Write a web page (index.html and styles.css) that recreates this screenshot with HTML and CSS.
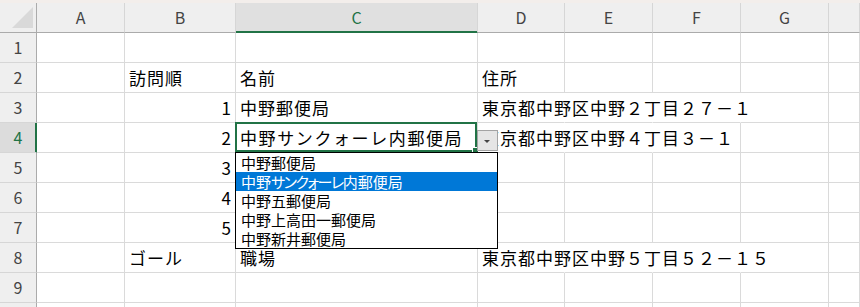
FILE: index.html
```html
<!DOCTYPE html>
<html lang="ja">
<head>
<meta charset="utf-8">
<title>Sheet</title>
<link rel="stylesheet" href="styles.css">
</head>
<body>
<div class="app">
  <div class="band"></div>
  <div class="sheet">
    <div class="corner"><svg class="tri" width="37" height="29" viewBox="0 0 37 29"><polygon points="12,25 33,25 33,4" fill="#d9d9d9"/></svg></div>
    <div class="ch">A</div><div class="ch">B</div><div class="ch ch-sel">C</div><div class="ch">D</div><div class="ch">E</div><div class="ch">F</div><div class="ch">G</div><div class="ch"></div>

    <div class="rh">1</div><div class="c"></div><div class="c"></div><div class="c"></div><div class="c"></div><div class="c"></div><div class="c"></div><div class="c"></div><div class="c"></div>

    <div class="rh">2</div><div class="c"></div><div class="c">訪問順</div><div class="c">名前</div><div class="c">住所</div><div class="c"></div><div class="c"></div><div class="c"></div><div class="c"></div>

    <div class="rh">3</div><div class="c"></div><div class="c num">1</div><div class="c">中野郵便局</div><div class="c nb">東京都中野区中野２丁目２７－１</div><div class="c nb"></div><div class="c nb"></div><div class="c"></div><div class="c"></div>

    <div class="rh rh-sel">4</div><div class="c"></div><div class="c num">2</div><div class="c active wide">中野サンクォーレ内郵便局<span class="frame"></span></div><div class="c nb">東京都中野区中野４丁目３－１</div><div class="c nb"></div><div class="c"></div><div class="c"></div><div class="c"></div>

    <div class="rh">5</div><div class="c"></div><div class="c num">3</div><div class="c"></div><div class="c"></div><div class="c"></div><div class="c"></div><div class="c"></div><div class="c"></div>

    <div class="rh">6</div><div class="c"></div><div class="c num">4</div><div class="c"></div><div class="c"></div><div class="c"></div><div class="c"></div><div class="c"></div><div class="c"></div>

    <div class="rh">7</div><div class="c"></div><div class="c num">5</div><div class="c"></div><div class="c"></div><div class="c"></div><div class="c"></div><div class="c"></div><div class="c"></div>

    <div class="rh">8</div><div class="c"></div><div class="c">ゴール</div><div class="c">職場</div><div class="c nb">東京都中野区中野５丁目５２－１５</div><div class="c nb"></div><div class="c nb"></div><div class="c"></div><div class="c"></div>

    <div class="rh">9</div><div class="c"></div><div class="c"></div><div class="c"></div><div class="c"></div><div class="c"></div><div class="c"></div><div class="c"></div><div class="c"></div>

    <div class="rh"></div><div class="c"></div><div class="c"></div><div class="c"></div><div class="c"></div><div class="c"></div><div class="c"></div><div class="c"></div><div class="c"></div>
  </div>

  <div class="dd-btn"><svg width="19" height="19" viewBox="0 0 19 19"><polygon points="6,9 12,9 9,12" fill="#444"/></svg></div>
  <ul class="dd-list">
    <li>中野郵便局</li>
    <li class="hl">中野<span class="kana">サンクォーレ</span>内郵便局</li>
    <li>中野五郵便局</li>
    <li>中野上高田一郵便局</li>
    <li>中野新井郵便局</li>
  </ul>
</div>
</body>
</html>
```

FILE: styles.css
```css
html, body {
  margin: 0;
  padding: 0;
  background: #ffffff;
  overflow: hidden;
}

.app {
  position: relative;
  width: 860px;
  height: 307px;
  overflow: hidden;
  font-family: "Noto Sans CJK JP", "Noto Sans", sans-serif;
}

.band {
  height: 3px;
  background: #f3eeeb;
}

.sheet {
  display: grid;
  grid-template-columns: 37px 88px 111px 242px 87px 88px 88px 88px 1fr;
  grid-auto-rows: 30px;
}

.corner {
  background: #efefef;
  border-right: 1px solid #ababab;
  border-bottom: 1px solid #ababab;
  box-sizing: border-box;
}

.tri {
  display: block;
}

.ch {
  box-sizing: border-box;
  background: #efefef;
  border-right: 1px solid #d6d6d6;
  border-bottom: 1px solid #ababab;
  color: #444;
  font-size: 16px;
  line-height: 29px;
  text-align: center;
}

.ch-sel {
  background: #e0e0e0;
  color: #217346;
  border-bottom-color: #217346;
  box-shadow: inset 0 -1px 0 #217346;
}

.rh {
  box-sizing: border-box;
  background: #efefef;
  border-right: 1px solid #ababab;
  border-bottom: 1px solid #d6d6d6;
  color: #444;
  font-size: 16px;
  line-height: 29px;
  text-align: center;
}

.rh-sel {
  background: #dcdcdc;
  color: #217346;
  border-right-color: #217346;
  box-shadow: inset -1px 0 0 #217346;
}

.c {
  position: relative;
  box-sizing: border-box;
  border-right: 1px solid #dadada;
  border-bottom: 1px solid #dadada;
  font-size: 17px;
  letter-spacing: 1px;
  line-height: 29px;
  padding-left: 4px;
  color: #000;
  white-space: nowrap;
  overflow: visible;
}

.c.wide {
  letter-spacing: 1.6px;
}

.c.nb {
  border-right-color: transparent;
  z-index: 1;
}

.c.num {
  text-align: right;
  padding-right: 4px;
  letter-spacing: 0;
}

.frame {
  position: absolute;
  left: -1px;
  top: -1px;
  right: 0;
  bottom: 0;
  border: 2px solid #217346;
  pointer-events: none;
}

.frame::after {
  content: "";
  position: absolute;
  right: -4px;
  bottom: -4px;
  width: 5px;
  height: 5px;
  background: #217346;
  border: 1px solid #fff;
}

.dd-btn {
  position: absolute;
  left: 477px;
  top: 130px;
  width: 21px;
  height: 21px;
  box-sizing: border-box;
  background: #e5e5e5;
  border: 1px solid #a3a3a3;
  z-index: 3;
}

.dd-btn svg {
  display: block;
}

.dd-list {
  position: absolute;
  left: 235px;
  top: 152px;
  width: 263px;
  height: 97px;
  box-sizing: border-box;
  margin: 0;
  padding: 0;
  list-style: none;
  background: #fff;
  border: 1px solid #000;
  z-index: 4;
  font-size: 15px;
  font-feature-settings: "palt";
}

.dd-list li {
  height: 19px;
  line-height: 19px;
  padding-left: 5px;
  color: #000;
  white-space: nowrap;
}

.dd-list .kana {
  letter-spacing: -1.5px;
}

.dd-list li.hl {
  background: #0078d7;
  color: #fff;
}
```
